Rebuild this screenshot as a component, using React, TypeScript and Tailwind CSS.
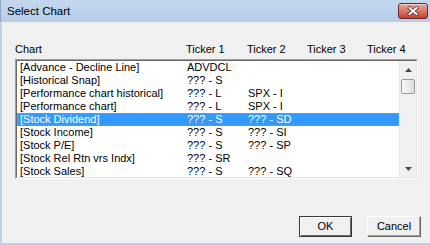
const rows: [string, string, string][] = [
  ["[Advance - Decline Line]", "ADVDCL", ""],
  ["[Historical Snap]", "??? - S", ""],
  ["[Performance chart historical]", "??? - L", "SPX - I"],
  ["[Performance chart]", "??? - L", "SPX - I"],
  ["[Stock Dividend]", "??? - S", "??? - SD"],
  ["[Stock Income]", "??? - S", "??? - SI"],
  ["[Stock P/E]", "??? - S", "??? - SP"],
  ["[Stock Rel Rtn vrs Indx]", "??? - SR", ""],
  ["[Stock Sales]", "??? - S", "??? - SQ"],
];

const selected = 4;

function CloseButton() {
  return (
    <div className="mt-[3px] mr-[2px] w-[30px] h-[16px] rounded-[3px] border border-[#6b2b2b] bg-linear-to-b from-[#e8a898] via-[#d77a66] to-[#c4412c] flex items-center justify-center shadow-[inset_0_1px_0_rgba(255,255,255,0.5)]">
      <svg width="12" height="10" viewBox="0 0 12 10">
        <path d="M2.5 2 L9.5 8 M9.5 2 L2.5 8" stroke="#5a2a2a" strokeWidth="3.6" strokeLinecap="square" />
        <path d="M2.5 2 L9.5 8 M9.5 2 L2.5 8" stroke="#ffffff" strokeWidth="2" strokeLinecap="square" />
      </svg>
    </div>
  );
}

function Scrollbar() {
  return (
    <div className="w-[17px] flex flex-col bg-[#f0f0f0] border-l border-[#e6e6e6]">
      {/* up arrow */}
      <div className="h-[17px] flex items-center justify-center">
        <svg width="7" height="4" viewBox="0 0 7 4">
          <polygon points="3.5,0 7,4 0,4" fill="#4a4a4a" />
        </svg>
      </div>
      <div className="mt-[1px] mx-[1px] h-[15px] rounded-[2px] border border-[#9a9a9a] bg-linear-to-r from-[#fafafa] to-[#dcdcdc]" />
      <div className="flex-1" />
      {/* down arrow */}
      <div className="h-[17px] flex items-center justify-center">
        <svg width="7" height="4" viewBox="0 0 7 4">
          <polygon points="0,0 7,0 3.5,4" fill="#4a4a4a" />
        </svg>
      </div>
    </div>
  );
}

export default function App() {
  return (
    <div className="w-[430px] h-[245px] flex flex-col overflow-hidden text-black font-['Liberation_Sans',Arial,sans-serif]">
      {/* Title bar */}
      <div className="h-[22px] flex items-start justify-between bg-linear-to-b from-[#c3d7ee] to-[#b6cce7] border-l border-[#8fa6c2]">
        <span className="mt-[4px] ml-[6px] text-[11.5px] leading-[15px]">Select Chart</span>
        <CloseButton />
      </div>

      {/* Body */}
      <div className="flex-1 flex flex-col bg-[#f0f0f0] border-l-2 border-b-2 border-[#b9d1ea] text-[11px] leading-[13px]">
        {/* Column headers */}
        <div className="mt-[21px] pl-[13px] flex">
          <span className="w-[171px]">Chart</span>
          <span className="w-[61px]">Ticker 1</span>
          <span className="w-[60px]">Ticker 2</span>
          <span className="w-[60px]">Ticker 3</span>
          <span>Ticker 4</span>
        </div>

        {/* List box */}
        <div className="mt-[3px] ml-[13px] w-[403px] h-[120px] border border-t-[#a0a0a0] border-l-[#a0a0a0] border-r-white border-b-white">
          <div className="h-full flex bg-white border border-t-[#696969] border-l-[#696969] border-r-[#e3e3e3] border-b-[#e3e3e3]">
            <div className="flex-1 overflow-hidden">
              {rows.map(([chart, t1, t2], i) => (
                <div
                  key={chart}
                  className={
                    i === selected
                      ? "h-[13px] flex bg-[#3399ff] text-white outline-1 outline-dotted outline-[#e0862c] -outline-offset-1"
                      : "h-[13px] flex"
                  }
                >
                  <span className="w-[170px] pl-[3px] whitespace-nowrap">{chart}</span>
                  <span className="w-[61px] whitespace-nowrap">{t1}</span>
                  <span className="whitespace-nowrap">{t2}</span>
                </div>
              ))}
            </div>
            <Scrollbar />
          </div>
        </div>

        {/* Buttons */}
        <div className="mt-[37px] pr-[9px] flex justify-end gap-[15px]">
          <button className="w-[53px] h-[21px] flex items-center justify-center bg-[#f0f0f0] border border-[#3a3a3a] shadow-[inset_1px_1px_0_#ffffff,inset_-1px_-1px_0_#696969]">
            OK
          </button>
          <button className="w-[54px] h-[21px] flex items-center justify-center bg-[#f0f0f0] border border-t-white border-l-white border-r-[#696969] border-b-[#696969] shadow-[inset_-1px_-1px_0_#a0a0a0]">
            Cancel
          </button>
        </div>
      </div>
    </div>
  );
}
